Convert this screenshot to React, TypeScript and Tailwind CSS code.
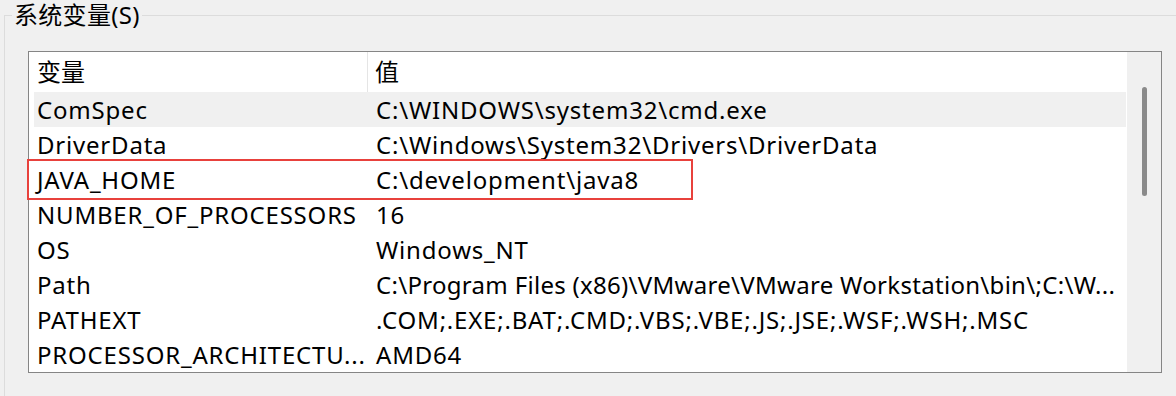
import React from "react";

const rows: [string, string, string][] = [
  ["ComSpec", "C:\\WINDOWS\\system32\\cmd.exe", "tracking-[0.8px]"],
  ["DriverData", "C:\\Windows\\System32\\Drivers\\DriverData", "tracking-[0.8px]"],
  ["JAVA_HOME", "C:\\development\\java8", "tracking-[0.8px]"],
  ["NUMBER_OF_PROCESSORS", "16", "tracking-[0.8px]"],
  ["OS", "Windows_NT", "tracking-[0.8px]"],
  ["Path", "C:\\Program Files (x86)\\VMware\\VMware Workstation\\bin\\;C:\\W...", "tracking-[0.3px]"],
  ["PATHEXT", ".COM;.EXE;.BAT;.CMD;.VBS;.VBE;.JS;.JSE;.WSF;.WSH;.MSC", "tracking-[0.8px]"],
  ["PROCESSOR_ARCHITECTU...", "AMD64", "tracking-[0.8px]"],
];

export default function App() {
  return (
    <div
      className="relative w-[1176px] h-[396px] overflow-hidden bg-[#f0f0f0] text-[24px] text-black"
      style={{ fontFamily: '"Noto Sans", "Noto Sans CJK SC", sans-serif' }}
    >
      <fieldset className="ml-[4px] w-[1300px] h-[420px] border-l border-t border-[#dcdcdc] pl-[7px]">
        <legend className="px-[2px] h-[30px] leading-[30px] text-[24px] tracking-[0.3px]">系统变量(S)</legend>
        <div className="ml-[16px] mt-[21px] w-[1134px] h-[322px] border border-[#858585] flex">
          <div className="flex-1 min-w-0 overflow-hidden flex flex-col bg-white">
            <div className="h-[40px] flex items-center shrink-0">
              <div className="w-[339px] h-full pl-[8px] flex items-center border-r border-[#e5e5e5]">变量</div>
              <div className="pl-[7px]">值</div>
            </div>
            <div className="flex flex-col pl-[5px]">
              {rows.map(([k, v, tr], i) => (
                <div
                  key={k}
                  className={`h-[35px] flex items-center whitespace-nowrap ${i === 0 ? "bg-[#f0f0f0]" : ""}`}
                >
                  <div className="w-[334px] shrink-0 pl-[3px] tracking-[0.8px]">{k}</div>
                  <div className={`pl-[8px] ${tr}`}>{v}</div>
                </div>
              ))}
            </div>
          </div>
          <div className="w-[35px] shrink-0 border-l border-white bg-[#f0f0f0] flex justify-center pt-[35px]">
            <div className="w-[5px] h-[109px] rounded-full bg-[#8a8a8a]" />
          </div>
        </div>
      </fieldset>
      <div className="absolute left-[27px] top-[159px] w-[666px] h-[41px] border-2 border-[#e8413c]" />
    </div>
  );
}
